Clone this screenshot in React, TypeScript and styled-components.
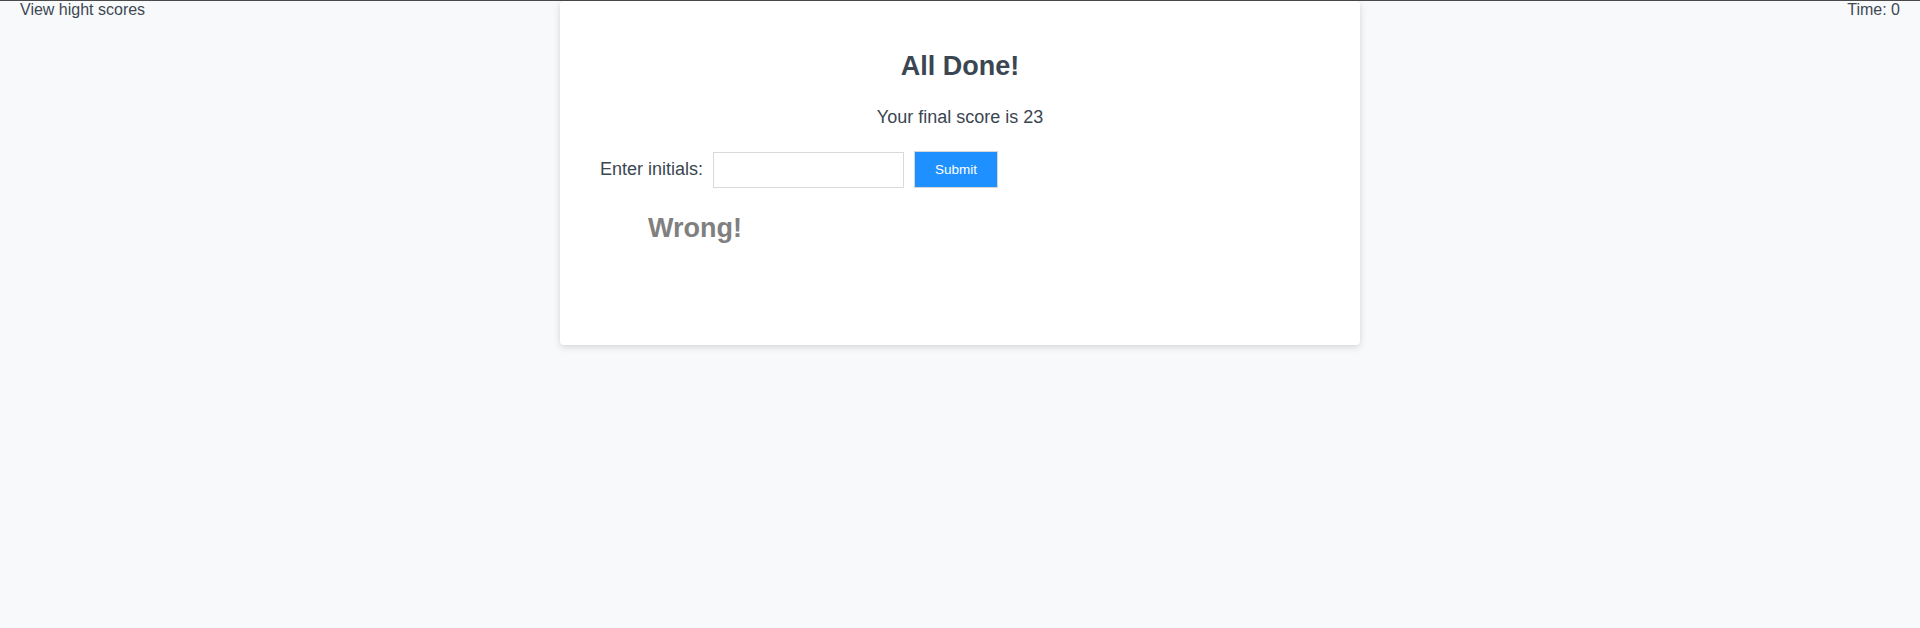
import React from "react";
import styled, { createGlobalStyle } from "styled-components";

const GlobalStyle = createGlobalStyle`
  html, body {
    margin: 0;
    padding: 0;
    background: #f8f9fb;
  }
  body {
    font-family: "Liberation Sans", Arial, sans-serif;
    color: #3a4651;
  }
`;

const Page = styled.div`
  display: grid;
  grid-template-columns: 1fr 800px 1fr;
  align-items: start;
  min-height: 627px;
  border-top: 1px solid #4a4a4a;
  background: #f8f9fb;
`;

const HeaderText = styled.div<{ $align: "left" | "right" }>`
  font-size: 16px;
  line-height: 18px;
  color: #3d4852;
  text-align: ${(p) => p.$align};
  padding: 0 20px;
`;

const Card = styled.section`
  background: #ffffff;
  border-radius: 4px;
  box-shadow: 0 2px 7px rgba(0, 0, 0, 0.15);
  padding: 50px 40px 0;
  height: 344px;
  box-sizing: border-box;
  display: flex;
  flex-direction: column;
`;

const Title = styled.h2`
  margin: 0;
  font-size: 27px;
  line-height: 30px;
  font-weight: 700;
  text-align: center;
  color: #3a4651;
`;

const Score = styled.p`
  margin: 26px 0 0;
  font-size: 18px;
  line-height: 21px;
  text-align: center;
  color: #3a4651;
`;

const FormRow = styled.form`
  margin-top: 23px;
  display: flex;
  align-items: center;
  gap: 10px;
`;

const Label = styled.label`
  font-size: 18px;
  line-height: 21px;
  color: #3a4651;
`;

const Input = styled.input`
  width: 191px;
  height: 36px;
  box-sizing: border-box;
  border: 1px solid #d9d9d9;
  background: #fff;
  padding: 0 6px;
  font-family: "Liberation Sans", Arial, sans-serif;
  font-size: 16px;
  outline: none;
`;

const SubmitButton = styled.button`
  box-sizing: content-box;
  width: 82px;
  height: 35px;
  border: 1px solid #d6d6d6;
  background: #1e90ff;
  color: #ffffff;
  font-family: "Liberation Sans", Arial, sans-serif;
  font-size: 13.5px;
  padding: 0;
  cursor: pointer;
`;

const Feedback = styled.div`
  margin: 25px 0 0 48px;
  font-size: 27px;
  line-height: 31px;
  font-weight: 700;
  color: #808080;
`;

export default function App() {
  return (
    <>
      <GlobalStyle />
      <Page>
        <HeaderText $align="left">View hight scores</HeaderText>
        <Card>
          <Title>All Done!</Title>
          <Score>Your final score is 23</Score>
          <FormRow onSubmit={(e) => e.preventDefault()}>
            <Label htmlFor="initials">Enter initials:</Label>
            <Input id="initials" type="text" />
            <SubmitButton type="submit">Submit</SubmitButton>
          </FormRow>
          <Feedback>Wrong!</Feedback>
        </Card>
        <HeaderText $align="right">Time: 0</HeaderText>
      </Page>
    </>
  );
}
